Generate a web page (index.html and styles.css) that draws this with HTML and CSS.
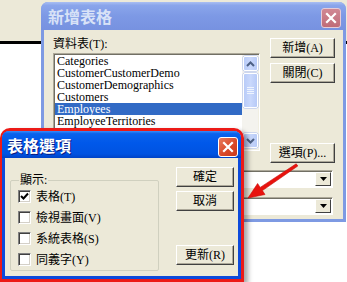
FILE: index.html
```html
<!DOCTYPE html>
<html>
<head>
<meta charset="utf-8">
<link rel="stylesheet" href="styles.css">
</head>
<body>
<div class="desk">
  <div class="topstrip"></div>

  <div class="win back">
    <div class="tb tb-back">
      <span class="ttl ttl-back">新增表格</span>
      <span class="xbtn xbtn-back"><svg width="12" height="12" viewBox="0 0 12 12"><path d="M2 2 L10 10 M10 2 L2 10" stroke="#fff" stroke-width="2.2" stroke-linecap="square"/></svg></span>
    </div>
    <div class="wbody back-body">
      <div class="bgrid">
        <div class="lcol">
          <div class="lbl">資料表(T):</div>
          <div class="listbox">
            <ul class="items">
              <li>Categories</li>
              <li>CustomerCustomerDemo</li>
              <li>CustomerDemographics</li>
              <li>Customers</li>
              <li class="sel">Employees</li>
              <li>EmployeeTerritories</li>
              <li>Order Details</li>
            </ul>
            <div class="vscroll">
              <span class="sb-btn"><svg width="9" height="6" viewBox="0 0 9 6"><path d="M1 5 L4.5 1.5 L8 5" fill="none" stroke="#4D6185" stroke-width="2"/></svg></span>
              <span class="sb-thumb"><svg width="7" height="7" viewBox="0 0 7 7"><path d="M0 0.5H7M0 2.5H7M0 4.5H7M0 6.5H7" stroke="#8CB0F8" stroke-width="1"/></svg></span>
              <span class="sb-fill"></span>
              <span class="sb-btn"><svg width="9" height="6" viewBox="0 0 9 6"><path d="M1 1 L4.5 4.5 L8 1" fill="none" stroke="#4D6185" stroke-width="2"/></svg></span>
            </div>
          </div>
        </div>
        <div class="rcol">
          <button class="btn bb-add">新增(A)</button>
          <button class="btn bb-close">關閉(C)</button>
          <button class="btn bb-opt">選項(P)...</button>
        </div>
      </div>
      <div class="combos">
        <div class="combo"><span class="cbtn"><svg width="7" height="4" viewBox="0 0 7 4"><path d="M0 0H7L3.5 4Z" fill="#000"/></svg></span></div>
        <div class="combo"><span class="cbtn"><svg width="7" height="4" viewBox="0 0 7 4"><path d="M0 0H7L3.5 4Z" fill="#000"/></svg></span></div>
      </div>
    </div>
  </div>

  <div class="annot">
    <div class="win front">
      <div class="tb tb-front">
        <span class="ttl ttl-front">表格選項</span>
        <span class="xbtn xbtn-front"><svg width="12" height="12" viewBox="0 0 12 12"><path d="M2 2 L10 10 M10 2 L2 10" stroke="#fff" stroke-width="2.2" stroke-linecap="square"/></svg></span>
      </div>
      <div class="wbody front-body">
        <fieldset class="grp">
          <legend>顯示:</legend>
          <div class="chk"><span class="box"><svg width="9" height="9" viewBox="0 0 9 9"><path d="M1 4 L3.5 6.5 L8 1.5" fill="none" stroke="#000" stroke-width="2"/></svg></span><span>表格(T)</span></div>
          <div class="chk"><span class="box"></span><span>檢視畫面(V)</span></div>
          <div class="chk"><span class="box"></span><span>系統表格(S)</span></div>
          <div class="chk"><span class="box"></span><span>同義字(Y)</span></div>
        </fieldset>
        <div class="fcol">
          <button class="btn fb-ok">確定</button>
          <button class="btn fb-cancel">取消</button>
          <button class="btn fb-refresh">更新(R)</button>
        </div>
      </div>
    </div>
  </div>

  <svg class="arrow" width="347" height="282" viewBox="0 0 347 282">
    <polygon points="248,198 265,194.5 262.4,190.6 297.8,166 296.2,163.8 260.2,187.4 257.6,183.5" fill="#E8130E" stroke="#C80A06" stroke-width="0.6"/>
  </svg>
</div>
</body>
</html>
```

FILE: styles.css
```css
html, body {
  margin: 0;
  padding: 0;
  background: #fff;
}
body {
  font-family: "Liberation Serif", "Noto Sans CJK TC", serif;
  font-size: 12px;
  line-height: 14px;
  color: #000;
}
.desk {
  position: relative;
  width: 347px;
  height: 282px;
  overflow: hidden;
  background: #fff;
}
.topstrip {
  height: 41px;
  background: #ECE9D8;
  border-bottom: 1px solid #000;
  box-shadow: 0 2px 0 #000;
}

/* windows */
.win {
  box-sizing: border-box;
  display: flex;
  flex-direction: column;
}
.tb {
  display: flex;
  align-items: center;
  justify-content: space-between;
  margin: 0 -3px;
  flex: none;
}
.ttl {
  font-family: "Noto Sans CJK TC", sans-serif;
  font-weight: bold;
  font-size: 16px;
  line-height: 18px;
}
.xbtn {
  display: flex;
  align-items: center;
  justify-content: center;
  box-sizing: border-box;
  width: 20px;
  height: 20px;
  border-radius: 3px;
  border: 1px solid #fff;
}
.wbody {
  flex: 1;
  background: #ECE9D8;
}

/* back dialog */
.back {
  position: absolute;
  left: 41px;
  top: 2px;
  width: 305px;
  height: 220px;
  background: #7E9AE3;
  border-radius: 7px 7px 0 0;
  padding: 0 3px 3px;
}
.tb-back {
  height: 28px;
  padding: 0 5px 0 7px;
  border-radius: 7px 7px 0 0;
  background: linear-gradient(#A9BEF2 0%, #8AA5EB 12%, #7D99E5 50%, #7792E0 100%);
}
.ttl-back {
  color: #D8E2F7;
}
.xbtn-back {
  margin-top: 3px;
  background: linear-gradient(#D08894, #C06C78);
  border-color: #E6CBD6;
}
.back-body {
  padding: 6px 0 0 9px;
  display: flex;
  flex-direction: column;
}
.bgrid {
  display: flex;
  gap: 10px;
}
.lcol {
  width: 207px;
}
.lbl {
  height: 17px;
  line-height: 17px;
}
.listbox {
  box-sizing: border-box;
  width: 207px;
  height: 98px;
  display: flex;
  background: #fff;
  border: 1px solid;
  border-color: #ACA899 #fff #fff #ACA899;
  box-shadow: inset 1px 1px 0 #716F64, inset -1px -1px 0 #F1EFE2;
  padding: 1px;
  overflow: hidden;
}
.items {
  list-style: none;
  margin: 0;
  padding: 0;
  flex: 1;
  overflow: hidden;
}
.items li {
  height: 12px;
  line-height: 12px;
  padding-left: 2px;
  white-space: nowrap;
}
.items li.sel {
  background: #316AC5;
  color: #fff;
}
.vscroll {
  width: 16px;
  display: flex;
  flex-direction: column;
  background: #F4F3EE;
}
.sb-btn, .sb-thumb {
  box-sizing: border-box;
  display: flex;
  align-items: center;
  justify-content: center;
  width: 15px;
  margin-left: 1px;
  border: 1px solid #fff;
  border-radius: 2px;
  background: linear-gradient(90deg, #B9CCF8, #C9D8FC 50%, #B7CAF7);
  box-shadow: 0 0 0 0.5px #A8BCEC;
}
.sb-btn {
  height: 15px;
  margin-top: 1px;
}
.sb-btn:last-child {
  margin-top: 0;
  margin-bottom: 1px;
}
.sb-thumb {
  height: 35px;
  margin-top: 2px;
}
.sb-thumb svg path {
  stroke: #EEF4FE;
}
.sb-fill {
  flex: 1;
}
.rcol {
  width: 65px;
  margin-top: 2px;
  display: flex;
  flex-direction: column;
}
.btn {
  box-sizing: border-box;
  height: 20px;
  padding: 0;
  font-family: "Liberation Serif", "Noto Sans CJK TC", serif;
  font-size: 12px;
  line-height: 14px;
  color: #000;
  background: #ECE9D8;
  border: 1px solid;
  border-color: #fff #404040 #404040 #fff;
  box-shadow: inset -1px -1px 0 #ACA899;
  text-align: center;
}
.bb-close { margin-top: 5px; }
.bb-opt { margin-top: 60px; }
.combos {
  display: flex;
  flex-direction: column;
  align-items: flex-end;
  padding-right: 10px;
  margin-top: 7px;
  gap: 9px;
}
.combo {
  box-sizing: border-box;
  width: 150px;
  height: 18px;
  background: #fff;
  border: 1px solid;
  border-color: #ACA899 #fff #fff #ACA899;
  box-shadow: inset 1px 1px 0 #716F64;
  display: flex;
  justify-content: flex-end;
  padding: 1px;
}
.cbtn {
  box-sizing: border-box;
  width: 16px;
  height: 14px;
  display: flex;
  align-items: center;
  justify-content: center;
  background: #ECE9D8;
  border: 1px solid;
  border-color: #fff #404040 #404040 #fff;
}

/* red annotation + front dialog */
.annot {
  position: absolute;
  left: 0;
  top: 128px;
  width: 244px;
  height: 154px;
  box-sizing: border-box;
  border: 3px solid #EC1A17;
  border-left-width: 2px;
  border-radius: 10px 10px 0 0;
  box-shadow: 4px 3px 5px rgba(0, 0, 0, 0.35);
  z-index: 2;
}
.front {
  width: 100%;
  height: 100%;
  background: #0C4ADB;
  border-radius: 7px 7px 0 0;
  padding: 0 3px 3px;
}
.tb-front {
  height: 27px;
  padding: 0 3px 0 5px;
  border-radius: 7px 7px 0 0;
  background: linear-gradient(#3A8DFA 0%, #0A62EC 10%, #0058EA 45%, #0053E1 85%, #0043C6 100%);
}
.ttl-front {
  color: #fff;
  text-shadow: 1px 1px 0 #0A1A80;
}
.xbtn-front {
  margin-top: 4px;
  background: linear-gradient(135deg, #E87C5E, #D9492A 55%, #C9391C);
  border-color: #fff;
}
.front-body {
  display: flex;
  padding: 9px 0 0 5px;
}
.grp {
  box-sizing: border-box;
  width: 149px;
  height: 98px;
  margin: 6px 0 0 0;
  padding: 3px 0 4px 8px;
  border: 1px solid #D0D0BF;
  border-radius: 2px;
}
.grp legend {
  padding: 0 1px;
  height: 14px;
  line-height: 14px;
}
.chk {
  display: flex;
  align-items: center;
  height: 13px;
  margin-bottom: 8px;
  margin-left: -1px;
  white-space: nowrap;
}
.chk:last-child {
  margin-bottom: 0;
}
.box {
  box-sizing: border-box;
  width: 13px;
  height: 13px;
  margin-right: 5px;
  background: #fff;
  border: 1px solid;
  border-color: #808080 #fff #fff #808080;
  box-shadow: inset 1px 1px 0 #404040, inset -1px -1px 0 #D4D0C8;
  display: flex;
  align-items: center;
  justify-content: center;
}
.fcol {
  width: 58px;
  margin-left: 17px;
  display: flex;
  flex-direction: column;
}
.fb-cancel { margin-top: 4px; }
.fb-refresh { margin-top: 34px; }

.arrow {
  position: absolute;
  left: 0;
  top: 0;
  z-index: 3;
  pointer-events: none;
}
```
